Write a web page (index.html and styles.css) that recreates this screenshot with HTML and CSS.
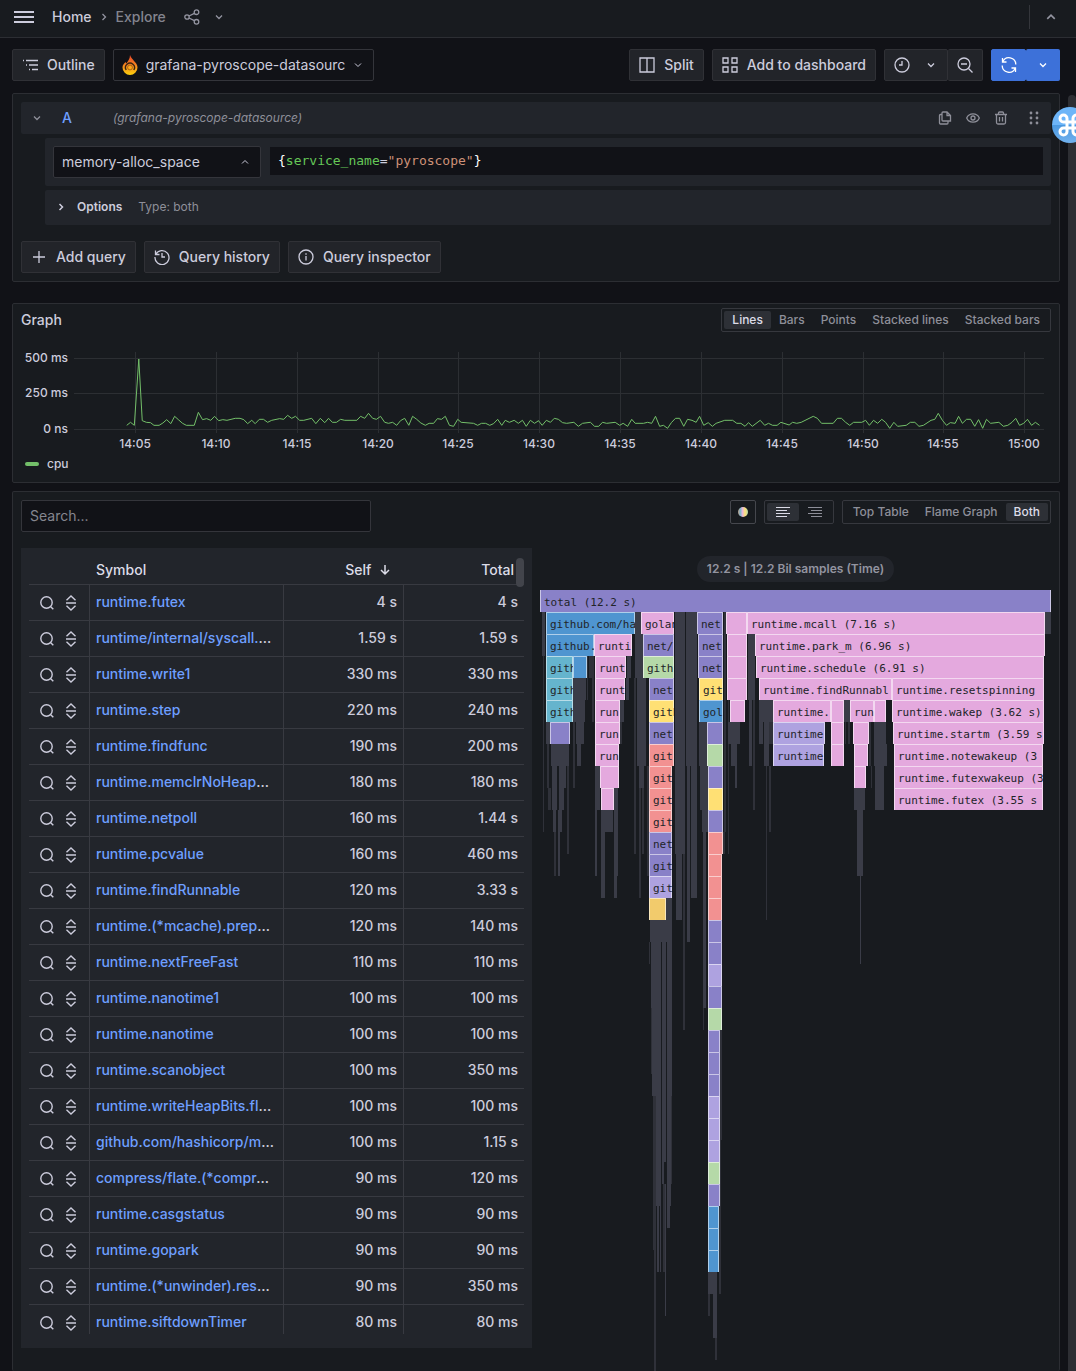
FILE: index.html
```html
<!DOCTYPE html>
<html lang="en">
<head>
<meta charset="utf-8">
<title>Explore - Grafana</title>
<link rel="stylesheet" href="styles.css">
</head>
<body>
<svg class="sprite" aria-hidden="true">
  <symbol id="down" viewBox="0 0 16 16"><path d="M5 6.500l3 3 3-3"/></symbol>
  <symbol id="up" viewBox="0 0 16 16"><path d="M5 9.500l3-3 3 3"/></symbol>
  <symbol id="right" viewBox="0 0 16 16"><path d="M6.500 5l3 3-3 3"/></symbol>
  <symbol id="lens" viewBox="0 0 16 16"><circle cx="7.500" cy="7.500" r="5.700"/><path d="M11.700 11.700l2.600 2.600"/></symbol>
  <symbol id="sandwich" viewBox="0 0 16 16"><path d="M3.500 5.200L8 1l4.500 4.200M3 8h10M3.500 10.800L8 15l4.500-4.200"/></symbol>
</svg>

<header class="topbar">
  <button class="plain menu" aria-label="Menu"><svg width="20" height="12" viewBox="0 0 20 12"><path d="M0 1h20M0 6h20M0 11h20" stroke-width="2"/></svg></button>
  <nav class="crumbs" aria-label="Breadcrumbs">
    <a href="#home">Home</a>
    <svg width="16" height="16"><use href="#right"/></svg>
    <a href="#explore" class="current">Explore</a>
  </nav>
  <button class="plain share" aria-label="Share"><svg width="16" height="16" viewBox="0 0 16 16"><circle cx="3" cy="8" r="2.200"/><circle cx="12.500" cy="3.200" r="2.300"/><circle cx="12.500" cy="12.800" r="2.300"/><path d="M5 7l5.400-2.700M5 9l5.400 2.700"/></svg></button>
  <button class="plain" aria-label="Share options"><svg width="16" height="16"><use href="#down"/></svg></button>
  <span class="spring"></span>
  <span class="divider"></span>
  <button class="plain" aria-label="Collapse"><svg width="20" height="20"><use href="#up"/></svg></button>
</header>

<main class="page">
  <div class="toolbar">
    <button class="btn"><svg width="16" height="16" viewBox="0 0 16 16"><path d="M1 3.500h1M4 3.500h12M4 8h1M7 8h9M7 12.500h1M10 12.500h6"/></svg>Outline</button>
    <button class="picker source">
      <svg class="flame-logo" width="16" height="20" viewBox="0 0 16 20"><defs><linearGradient id="fire" x1="0" y1="0" x2="0" y2="1"><stop offset="0" stop-color="#e8442a"/><stop offset=".5" stop-color="#f48420"/><stop offset="1" stop-color="#fcd00c"/></linearGradient></defs><path fill="url(#fire)" d="M8 0c1 3 3 4 4 6 2 2 3.500 4 3.500 6.500a7.500 7.500 0 0 1-15 0C.5 10 2 8.500 3.500 7l.8 1.600C6 6 8 4 8 0z"/><path d="M4.200 15A4.500 4.500 0 1 1 11.800 15" fill="none" stroke="#3a2412" stroke-width="1.400"/><circle cx="8" cy="12.500" r="2.400" fill="#fba718" stroke="#7a3c12" stroke-width=".6"/></svg>
      <span>grafana-pyroscope-datasourc</span>
      <svg width="16" height="16"><use href="#down"/></svg>
    </button>
    <span class="spring"></span>
    <button class="btn"><svg width="16" height="16" viewBox="0 0 16 16"><path d="M1 1h14v14H1zM8 1v14"/></svg>Split</button>
    <button class="btn"><svg width="16" height="16" viewBox="0 0 16 16"><path d="M1 1h5v5H1zM10 1h5v5h-5zM1 10h5v5H1zM10 10h5v5h-5z"/></svg>Add to dashboard</button>
    <div class="group">
      <button class="btn time" aria-label="Time range"><svg width="16" height="16" viewBox="0 0 16 16"><circle cx="8" cy="8" r="7"/><path d="M8 4v4H5"/></svg><svg width="16" height="16"><use href="#down"/></svg></button>
      <button class="btn" aria-label="Zoom out"><svg width="16" height="16" viewBox="0 0 16 16"><circle cx="7" cy="7" r="6"/><path d="M11.500 11.500l4 4M4 7h6"/></svg></button>
    </div>
    <div class="group run">
      <button class="btn primary" aria-label="Run query"><svg width="16" height="16" viewBox="0 0 16 16"><path d="M1.500 1v4h4M1.700 5A6.800 6.800 0 0 1 14.800 7.500M14.500 15v-4h-4M14.300 11A6.800 6.800 0 0 1 1.200 8.500"/></svg></button>
      <button class="btn primary" aria-label="Refresh interval"><svg width="16" height="16"><use href="#down"/></svg></button>
    </div>
  </div>

  <section class="panel query">
    <div class="query-head">
      <button class="plain" aria-label="Collapse query"><svg width="16" height="16"><use href="#down"/></svg></button>
      <span class="ref">A</span>
      <em>(grafana-pyroscope-datasource)</em>
      <span class="spring"></span>
      <button class="plain" aria-label="Duplicate"><svg width="14" height="14" viewBox="0 0 14 14"><path d="M5 1h4l3.500 3.500V10H5a1 1 0 0 1-1-1V2a1 1 0 0 1 1-1zM9 1v3.500h3.500M4 3.500H2.500a1 1 0 0 0-1 1V12a1 1 0 0 0 1 1H9a1 1 0 0 0 1-1v-2"/></svg></button>
      <button class="plain" aria-label="Hide"><svg width="14" height="14" viewBox="0 0 14 14"><path d="M.7 7C3 1.500 11 1.500 13.300 7 11 12.500 3 12.500.7 7z"/><circle cx="7" cy="7" r="2"/></svg></button>
      <button class="plain" aria-label="Remove"><svg width="14" height="14" viewBox="0 0 14 14"><path d="M1 3.500h12M2.500 3.500v8a1.500 1.500 0 0 0 1.500 1.500h6a1.500 1.500 0 0 0 1.500-1.500v-8M4.500 3.500V2a1 1 0 0 1 1-1h3a1 1 0 0 1 1 1v1.500M5.500 6v4.500M8.500 6v4.500"/></svg></button>
      <button class="plain drag" aria-label="Drag"><svg width="10" height="14" viewBox="0 0 10 14"><g class="solid"><circle cx="2" cy="2" r="1.400"/><circle cx="8" cy="2" r="1.400"/><circle cx="2" cy="7" r="1.400"/><circle cx="8" cy="7" r="1.400"/><circle cx="2" cy="12" r="1.400"/><circle cx="8" cy="12" r="1.400"/></g></svg></button>
    </div>
    <div class="query-row">
      <button class="picker profile"><span>memory-alloc_space</span><svg width="16" height="16"><use href="#up"/></svg></button>
      <div class="editor" role="textbox" aria-label="Label selector"><b>{</b><span class="key">service_name</span>=<span class="str">"pyroscope"</span><b>}</b></div>
    </div>
    <div class="options">
      <button class="plain"><svg width="16" height="16"><use href="#right"/></svg><strong>Options</strong></button>
      <span>Type: both</span>
    </div>
    <div class="query-actions">
      <button class="btn"><svg width="16" height="16" viewBox="0 0 16 16"><path d="M8 2v12M2 8h12"/></svg>Add query</button>
      <button class="btn"><svg width="16" height="16" viewBox="0 0 16 16"><path d="M1.500 1.500v4h4M1.800 5.300A7 7 0 1 1 1 8M8 4v4h3"/></svg>Query history</button>
      <button class="btn"><svg width="16" height="16" viewBox="0 0 16 16"><circle cx="8" cy="8" r="7"/><path d="M8 7v4.500M8 4.300v1.400"/></svg>Query inspector</button>
    </div>
  </section>

  <section class="panel graph">
    <div class="graph-head">
      <h2>Graph</h2>
      <div class="radios">
        <button class="on">Lines</button><button>Bars</button><button>Points</button><button>Stacked lines</button><button>Stacked bars</button>
      </div>
    </div>
    <svg class="chart" viewBox="21 340 1030 112" role="img" aria-label="cpu over time">
      <path class="grid" d="M74 358.500h970M74 393.500h970M74 429.500h970M135.500 352v81M216.500 352v81M297.500 352v81M378.500 352v81M458.500 352v81M539.500 352v81M620.500 352v81M701.500 352v81M782.500 352v81M863.500 352v81M943.500 352v81M1024.500 352v81"/>
      <g class="ylab"><text x="68" y="362">500 ms</text><text x="68" y="397">250 ms</text><text x="68" y="433">0 ns</text></g>
      <g class="xlab"><text x="135" y="448">14:05</text><text x="216" y="448">14:10</text><text x="297" y="448">14:15</text><text x="378" y="448">14:20</text><text x="458" y="448">14:25</text><text x="539" y="448">14:30</text><text x="620" y="448">14:35</text><text x="701" y="448">14:40</text><text x="782" y="448">14:45</text><text x="863" y="448">14:50</text><text x="943" y="448">14:55</text><text x="1024" y="448">15:00</text></g>
      <g class="series">
        <polyline transform="translate(0 295) scale(.3444 .3333)" points="368,391 379,382 390,391 403,192 413,377 425,382 437,383 447,391 462,391 473,384 484,374 496,386 507,364 519,375 530,385 541,391 564,391 576,352 588,374 600,371 612,376 623,364 635,377 647,374 659,376 683,370 697,370 708,374 719,386 731,376 741,386 753,373 765,373 777,382 789,376 812,371 824,373 835,361 847,370 858,364 870,376 882,376 905,370 917,386 930,370 943,383 954,370 965,382 977,382 989,373 1001,376 1036,376 1047,364 1059,370 1070,355 1082,370 1093,373 1105,364 1117,382 1128,385 1140,382 1152,391 1163,377 1175,370 1187,391 1198,364 1210,373 1222,384 1235,391 1246,385 1259,385 1270,371 1282,373 1293,364 1305,391 1317,394 1329,373 1339,382 1375,385 1387,391 1398,385 1410,385 1422,391 1433,386 1445,373 1457,391 1467,376 1479,382 1493,376 1505,385 1517,376 1528,394 1540,376 1552,385 1564,377"/>
        <polyline transform="translate(536 295) scale(.3444 .3333)" points="7,377 18,391 30,376 42,382 53,370 65,373 77,383 89,385 110,382 123,394 135,385 158,382 170,394 182,394 193,382 205,385 230,382 243,391 253,385 266,394 278,373 288,385 312,385 324,382 336,385 347,364 359,394 370,391 382,400 393,383 405,370 417,370 429,394 440,373 453,376 465,382 475,364 487,391 500,383 512,394 523,385 548,376 571,376 583,385 595,385 607,394 617,383 628,394 651,376 664,391 675,385 687,391 700,391 711,382 735,390 745,382 757,385 770,382 805,364 817,370 829,385 863,385 875,370 887,370 899,382 911,391 922,382 946,382 957,376 968,391 980,376 992,385 1004,373 1015,382 1027,400 1039,382 1050,394 1075,391 1087,382 1100,382 1112,394 1125,391 1147,376 1158,373 1168,355 1180,376 1192,391 1203,383 1217,385 1227,364 1238,385 1250,373 1262,373 1274,394 1285,374 1297,400 1308,373 1320,385 1344,382 1357,394 1370,391 1382,382 1393,370 1404,391 1416,385 1427,373 1439,391 1450,382 1462,391"/>
      </g>
    </svg>
    <div class="legend"><i></i>cpu</div>
  </section>

  <section class="panel profile-panel">
    <div class="profile-tools">
      <input class="search" type="text" placeholder="Search..." aria-label="Search">
      <span class="spring"></span>
      <button class="swatch" aria-label="Color scheme"><i></i></button>
      <div class="radios icons">
        <button class="on" aria-label="Align left"><svg width="16" height="16" viewBox="0 0 16 16"><path d="M1 3.500h14M1 6.500h11M1 9.500h14M1 12.500h11"/></svg></button><button aria-label="Align right"><svg width="16" height="16" viewBox="0 0 16 16"><path d="M1 3.500h14M4 6.500h11M1 9.500h14M4 12.500h11"/></svg></button>
      </div>
      <div class="radios"><button>Top Table</button><button>Flame Graph</button><button class="on">Both</button></div>
    </div>
    <div class="split">
      <div class="table-box">
        <div class="table-clip">
        <table>
          <colgroup><col class="c-act"><col class="c-sym"><col class="c-self"><col></colgroup>
          <thead><tr><th aria-label="Actions"></th><th class="sym">Symbol</th><th class="self">Self <svg width="12" height="12" viewBox="0 0 12 12"><path d="M6 1v9M2 6l4 4 4-4"/></svg></th><th>Total</th></tr></thead>
          <tbody id="rows"></tbody>
        </table>
        </div>
        <span class="thumb"></span>
      </div>
      <div class="flame-box">
        <div class="pill">12.2 s | 12.2 Bil samples (Time)</div>
        <svg id="flame" viewBox="0 0 511 792" role="img" aria-label="Flame graph"></svg>
      </div>
    </div>
  </section>
</main>
<span class="page-scroll"></span>
<button class="command" aria-label="Command palette"><svg width="24" height="24" viewBox="0 0 24 24"><path d="M9 9V5.500A3.500 3.500 0 1 0 5.500 9h13A3.500 3.500 0 1 0 15 5.500v13a3.500 3.500 0 1 0 3.500-3.500h-13A3.500 3.500 0 1 0 9 18.500z"/></svg></button>
<script src="profile.js"></script>
</body>
</html>
```
FILE: styles.css
```css
* { box-sizing: border-box; }
html { background: #111217; }
body {
  margin: 0; height: 100vh; overflow: hidden; position: relative;
  display: flex; flex-direction: column;
  background: #111217; color: #ccccdc;
  font: 14px/20px Inter, "Liberation Sans", sans-serif;
}
button, input { font: inherit; color: inherit; margin: 0; }
button { cursor: pointer; }
svg { fill: none; stroke: currentColor; flex: none; }
svg text, .solid { fill: currentColor; stroke: none; }
.sprite { position: absolute; width: 0; height: 0; }
.spring { flex: 1; }
.plain { display: flex; align-items: center; padding: 0; border: 0; background: none; }

.topbar { display: flex; align-items: center; flex: none; height: 38px; padding: 0 15px 4px 14px; background: #181b1f; border-bottom: 1px solid #2c2e33; color: #9394a0; }
.topbar svg { stroke-width: 1.300; }
.menu { color: #ccccdc; }
.crumbs { display: flex; align-items: center; gap: 4px; margin: 0 18px; }
.crumbs a { color: #ccccdc; font-weight: 500; text-decoration: none; }
.crumbs .current { color: #83848e; }
.share { margin-right: 11px; }
.divider { width: 1px; height: 24px; margin-right: 11px; background: #34363b; }

.page { flex: 1; min-height: 0; display: flex; flex-direction: column; padding: 11px 16px 0 12px; }
.toolbar { display: flex; gap: 8px; margin-bottom: 12px; }
.btn { display: flex; align-items: center; gap: 9px; height: 32px; padding: 0 9px; border: 1px solid #303136; border-radius: 2px; background: #222429; font-weight: 500; white-space: nowrap; }
.btn svg { stroke-width: 1.300; }
.picker { display: flex; align-items: center; gap: 8px; height: 32px; padding: 0 7px 0 8px; border: 1px solid #34353b; border-radius: 2px; background: #111217; text-align: left; }
.picker span { flex: 1; white-space: nowrap; }
.source { width: 261px; }
.source span { margin-right: -8px; }
.flame-logo { stroke: none; }
.group { display: flex; }
.group .btn + .btn { border-left: 0; }
.group .time { gap: 13px; padding-right: 8px; }
.run .btn { padding-right: 8px; }
.primary { background: #3d71d9; border-color: #3d71d9; color: #fff; }

.panel { border: 1px solid #2c2e33; border-radius: 2px; background: #181b1f; padding: 8px; }
.query { margin-bottom: 21px; }
.query-head { display: flex; align-items: center; height: 32px; padding: 0 12px 0 8px; gap: 14px; background: #22252b; border-radius: 2px; color: #8e8f99; font-size: 12px; }
.query-head svg { stroke-width: 1.300; }
.query-head .ref { width: 37px; margin-left: 3px; color: #6e9fff; font-size: 14px; font-weight: 500; }
.drag { margin-left: 7px; }
.query-row { display: flex; align-items: flex-start; gap: 9px; margin: 4px 0 4px 24px; height: 48px; padding: 8px; background: #22252b; border-radius: 2px; }
.profile { width: 208px; }
.editor { flex: 1; height: 28px; margin-top: 1px; padding: 0 8px; background: #111217; font: 13px/27px "DejaVu Sans Mono", monospace; }
.editor b { font-weight: 400; color: #fff; }
.key { color: #65c757; }
.str { color: #ce9178; }
.options { display: flex; align-items: center; gap: 16px; height: 35px; margin-left: 24px; padding: 0 8px 2px; background: #22252b; border-radius: 2px; color: #8e8f99; font-size: 12px; }
.options .plain { gap: 8px; color: #ccccdc; }
.options svg { stroke-width: 1.500; }
.options strong { font-weight: 600; }
.query-actions { display: flex; gap: 8px; margin-top: 16px; }

.graph { margin-bottom: 8px; padding-top: 4px; }
.graph-head { display: flex; justify-content: space-between; align-items: center; }
h2 { margin: 0; font-size: 14px; font-weight: 500; }
.radios { display: flex; height: 24px; padding: 2px; border: 1px solid #36383e; border-radius: 2px; }
.radios button { padding: 0 8px; border: 0; border-radius: 2px; background: none; color: #8e8f99; font-size: 12px; font-weight: 500; line-height: 18px; }
.radios .on { background: #2d3036; color: #dcdce8; }
.radios.icons button { display: flex; align-items: center; }
.chart { display: block; width: 100%; margin-top: 8px; font-size: 12px; font-weight: 500; }
.grid { stroke: #2c2f33; }
.ylab { text-anchor: end; }
.xlab { text-anchor: middle; }
.series { stroke: #73bf69; }
.series polyline { vector-effect: non-scaling-stroke; }
.legend { display: flex; align-items: center; gap: 8px; height: 22px; padding: 2px 0 0 4px; font-size: 12px; font-weight: 500; }
.legend i { width: 14px; height: 4px; border-radius: 2px; background: #73bf69; }

.profile-panel { flex: 1; min-height: 0; overflow: hidden; border-bottom: 0; padding-bottom: 0; }
.profile-tools { display: flex; gap: 8px; height: 32px; margin-bottom: 16px; }
.search { width: 350px; height: 32px; padding: 0 8px 2px; border: 1px solid #34353b; border-radius: 2px; background: #111217; outline: 0; }
.search::placeholder { color: #85868f; opacity: 1; }
.swatch { display: flex; align-items: center; justify-content: center; width: 26px; height: 24px; padding: 0; border: 1px solid #45474d; border-radius: 2px; background: none; }
.swatch i { width: 10px; height: 10px; border-radius: 50%; background: linear-gradient(90deg, #b9a08c, #86b9cf 25%, #e8b7d9 45%, #ffe27a 70%, #b7dbab); }
.split { display: grid; grid-template-columns: 1fr 1fr; gap: 8px; }
.table-box { position: relative; min-width: 0; height: 800px; padding: 8px; background: #22252b; }
.table-clip { height: 778px; overflow: hidden; }
.thumb { position: absolute; right: 8px; top: 10px; width: 8px; height: 29px; border-radius: 4px; background: #42444b; }
table { width: 100%; table-layout: fixed; border-collapse: separate; border-spacing: 0; font-weight: 500; }
.c-act { width: 61px; } .c-sym { width: 194px; } .c-self { width: 120px; }
th { height: 29px; padding: 0 10px 0 6px; border-bottom: 1px solid #383a41; font-weight: 500; text-align: right; color: #dcdce8; }
th.sym { text-align: left; }
th.self { padding-right: 13px; }
th svg { margin-left: 4px; vertical-align: -1px; stroke-width: 1.500; }
td { height: 36px; padding: 0 6px 2px; border-bottom: 1px solid #383a41; border-right: 1px solid #383a41; text-align: right; white-space: nowrap; }
td:first-child { padding-bottom: 0; }
td:last-child { border-right: 0; }
td.sym { text-align: left; overflow: hidden; text-overflow: ellipsis; }
td a { color: #6e9fff; text-decoration: none; }
.acts { display: flex; gap: 8px; padding-left: 4px; }
.acts svg { stroke-width: 1.400; }
.flame-box { min-width: 0; padding-top: 8px; display: flex; flex-direction: column; align-items: center; }
.pill { height: 26px; margin-bottom: 8px; padding: 0 10px; border-radius: 13px; background: #22252b; color: #9394a0; font-size: 12px; font-weight: 600; line-height: 26px; }
#flame { display: block; width: 100%; font: 11px "DejaVu Sans Mono", monospace; color: #222429; }
#flame rect { stroke: none; }
.edge { stroke: #fff; stroke-opacity: .55; }
.minor { fill: #3a3c47; }
.faint { fill: #2f3139; }
.purple { fill: #8981c8; } .lilac { fill: #aea2e0; } .pink { fill: #e4a9de; } .blue { fill: #4f95d0; }
.teal { fill: #65b4cd; } .green { fill: #b5d9a8; } .yellow { fill: #ffe074; } .amber { fill: #f2cb6c; } .red { fill: #f29191; }

.page-scroll { position: absolute; right: 0; top: 95px; bottom: 0; width: 8px; border-radius: 4px 4px 0 0; background: #2d2e33; }
.command { position: absolute; right: -12px; top: 107px; display: flex; align-items: center; justify-content: center; width: 36px; height: 36px; padding: 0; border: 0; border-radius: 50%; background: linear-gradient(#6db5f8 50%, #4a98e0 50%, #71b1ee); color: #fff; }
.command svg { stroke-width: 3; }
```
FILE: profile.js
```js
const symbols = [
  ["runtime.futex", "4 s", "4 s"],
  ["runtime/internal/syscall.Syscall6", "1.59 s", "1.59 s"],
  ["runtime.write1", "330 ms", "330 ms"],
  ["runtime.step", "220 ms", "240 ms"],
  ["runtime.findfunc", "190 ms", "200 ms"],
  ["runtime.memclrNoHeapPointers", "180 ms", "180 ms"],
  ["runtime.netpoll", "160 ms", "1.44 s"],
  ["runtime.pcvalue", "160 ms", "460 ms"],
  ["runtime.findRunnable", "120 ms", "3.33 s"],
  ["runtime.(*mcache).prepareForSweep", "120 ms", "140 ms"],
  ["runtime.nextFreeFast", "110 ms", "110 ms"],
  ["runtime.nanotime1", "100 ms", "100 ms"],
  ["runtime.nanotime", "100 ms", "100 ms"],
  ["runtime.scanobject", "100 ms", "350 ms"],
  ["runtime.writeHeapBits.flush", "100 ms", "100 ms"],
  ["github.com/hashicorp/memberlist", "100 ms", "1.15 s"],
  ["compress/flate.(*compressor).deflate", "90 ms", "120 ms"],
  ["runtime.casgstatus", "90 ms", "90 ms"],
  ["runtime.gopark", "90 ms", "90 ms"],
  ["runtime.(*unwinder).resolveInternal", "90 ms", "350 ms"],
  ["runtime.siftdownTimer", "80 ms", "80 ms"]
];
document.getElementById("rows").innerHTML = symbols.map(([name, self, total]) => `<tr>
  <td><div class="acts"><button class="plain" aria-label="Search for symbol"><svg width="16" height="16"><use href="#lens"/></svg></button><button class="plain" aria-label="Show in sandwich view"><svg width="16" height="16"><use href="#sandwich"/></svg></button></div></td>
  <td class="sym"><a href="#symbol">${name}</a></td><td>${self}</td><td>${total}</td></tr>`).join("");

const ROW = 22;

// Collapsed frames: left, right, first level, end level, 1 when faint
const collapsed = [
  [2,5,1,3],[3,4,3,11,1],[6,10,6,7],[7,9,7,9,1],[8,11,9,10,1],
  [11,29,7,8],[12,17,8,10],[19,26,8,9],[19,24,9,10],[13,16,10,11],[18,22,10,11],[14,16,11,13,1],[18,20,11,13],[27,29,8,12,1],
  [33,46,4,5],[33,45,5,6],[36,44,6,7],[37,41,7,8],[33,35,6,9,1],[47,48,3,5,1],[49,54,3,4,1],[52,54,4,6,1],
  [87,91,3,4],[86,89,4,5],[80,84,5,6],[80,82,6,7,1],
  [55,60,8,10],[55,57,10,13],[61,73,10,11],[61,65,11,14],[74,78,9,13],[74,77,13,14],
  [95,101,1,2],[95,103,2,4],[94,96,4,12,1],[97,106,4,8],[99,104,8,9],[99,101,9,14,1],[102,104,9,12,1],[107,109,8,13,1],
  [135,145,1,12],[136,142,12,15],[143,145,12,20,1],[146,157,1,8],[147,150,8,16],[151,157,8,14],
  [159,167,6,8],[160,168,8,10],[162,168,10,11],[163,166,11,19],[163,164,19,20,1],
  [184,186,1,11,1],[183,185,11,12,1],[188,189,3,12,1],[188,200,6,7],[191,197,7,8],[195,197,8,9],
  [208,215,2,5],[209,212,5,8],[213,215,5,10,1],[219,233,5,6],[219,223,6,7],[224,229,6,8],[229,233,6,7,1],[226,227,8,15,1],[229,231,8,11,1],
  [304,310,5,6],[305,306,6,7,1],[308,310,6,7,1],[329,331,6,8,1],[331,332,8,9,1],
  [334,346,6,7],[334,347,7,8],[335,344,8,10],[314,325,9,10],[317,323,10,13],[320,321,13,17],[505,511,1,2],
  [126,132,14,15],[110,132,15,16],[109,110,16,17,1],[111,121,16,19],[122,126,16,19],[127,132,16,23],[111,113,19,22,1],[112,121,19,23],
  [113,115,23,30,1],[114,116,23,36,1],[116,121,23,28],[117,119,28,31],[120,121,28,31],[122,126,19,26],[122,124,26,27],
  [125,126,27,33],[123,125,27,31,1],[127,131,23,28],[131,132,23,27,1],[127,130,28,29],
  [180,182,20,25,1],[180,181,25,28,1],[179,181,28,32,1],[168,177,31,32],[168,170,32,33,1],[173,177,32,34],[175,177,34,35,1]
];

// Frames: level, left, right, colour, label
const frames = [
  [0,0,511,"purple","total (12.2 s)"],
  [1,6,95,"blue","github.com/ha"],[1,101,134,"pink","golan"],[1,157,183,"purple","net"],[1,186,207,"pink"],[1,207,505,"pink","runtime.mcall (7.16 s)"],
  [2,6,54,"blue","github."],[2,54,92,"pink","runti"],[2,103,134,"purple","net/"],[2,158,183,"purple","net"],[2,187,207,"pink"],[2,215,505,"pink","runtime.park_m (6.96 s)"],
  [3,6,33,"teal","gith"],[3,33,47,"blue"],[3,55,86,"pink","runt"],[3,103,134,"green","gith"],[3,158,183,"purple","net"],[3,187,207,"pink"],[3,216,504,"pink","runtime.schedule (6.91 s)"],
  [4,6,33,"teal","gith"],[4,55,85,"pink","runt"],[4,109,134,"purple","net"],[4,159,183,"yellow","git"],[4,187,207,"pink"],[4,219,352,"pink","runtime.findRunnabl"],[4,352,504,"pink","runtime.resetspinning"],
  [5,6,33,"teal","gith"],[5,55,80,"pink","run"],[5,109,134,"yellow","gith"],[5,159,183,"blue","gol"],[5,190,205,"pink"],[5,233,291,"pink","runtime."],[5,291,304,"pink"],[5,310,334,"pink","run"],[5,334,346,"pink"],[5,352,504,"pink","runtime.wakep (3.62 s)"],
  [6,10,30,"purple"],[6,55,80,"pink","run"],[6,109,134,"purple","net"],[6,167,183,"purple"],[6,233,285,"lilac","runtime"],[6,291,304,"pink"],[6,313,329,"pink"],[6,353,504,"pink","runtime.startm (3.59 s"],
  [7,55,79,"pink","run"],[7,109,134,"red","git"],[7,167,183,"green"],[7,233,284,"lilac","runtime"],[7,291,304,"pink"],[7,314,328,"pink"],[7,354,503,"pink","runtime.notewakeup (3"],
  [8,60,79,"pink"],[8,109,132,"red","git"],[8,168,183,"purple"],[8,314,326,"pink"],[8,354,503,"pink","runtime.futexwakeup (3"],
  [9,61,74,"pink"],[9,109,132,"red","git"],[9,168,183,"yellow"],[9,354,503,"pink","runtime.futex (3.55 s"],
  [10,109,132,"red","git"],[10,168,183,"purple"],
  [11,109,132,"purple","net"],[11,168,183,"red"],
  [12,109,132,"purple","git"],[12,168,182,"red"],
  [13,109,132,"lilac","git"],[13,168,182,"red"],
  [14,109,126,"amber"],[14,168,182,"red"],
  [15,168,182,"purple"],[16,168,182,"purple"],[17,168,182,"lilac"],[18,168,182,"purple"],[19,168,182,"green"],
  [20,168,180,"purple"],[21,168,180,"purple"],[22,168,180,"purple"],[23,168,180,"lilac"],[24,168,180,"lilac"],[25,168,180,"lilac"],
  [26,168,180,"green"],[27,168,180,"purple"],[28,168,179,"blue"],[29,168,179,"blue"],[30,168,179,"blue"]
];

const bars = collapsed.map(([l, r, from, to, faint]) =>
  `<rect class="${faint ? "faint" : "minor"}" x="${l}" y="${from * ROW}" width="${r - l}" height="${(to - from) * ROW}"/>`);
const boxes = frames.map(([level, l, r, colour, label]) => {
  const right = r - l - 0.5;
  const edge = level ? `M.5 ${ROW}V.5H${right}V${ROW}` : `M.5 0V${ROW}M${right} 0V${ROW}`;
  return `<svg x="${l}" y="${level * ROW}" width="${r - l}" height="${ROW}"><rect class="${colour}" width="100%" height="100%"/><path class="edge" d="${edge}"/>${label ? `<text x="4" y="16">${label}</text>` : ""}</svg>`;
});
document.getElementById("flame").innerHTML = bars.join("") + boxes.join("");
```
